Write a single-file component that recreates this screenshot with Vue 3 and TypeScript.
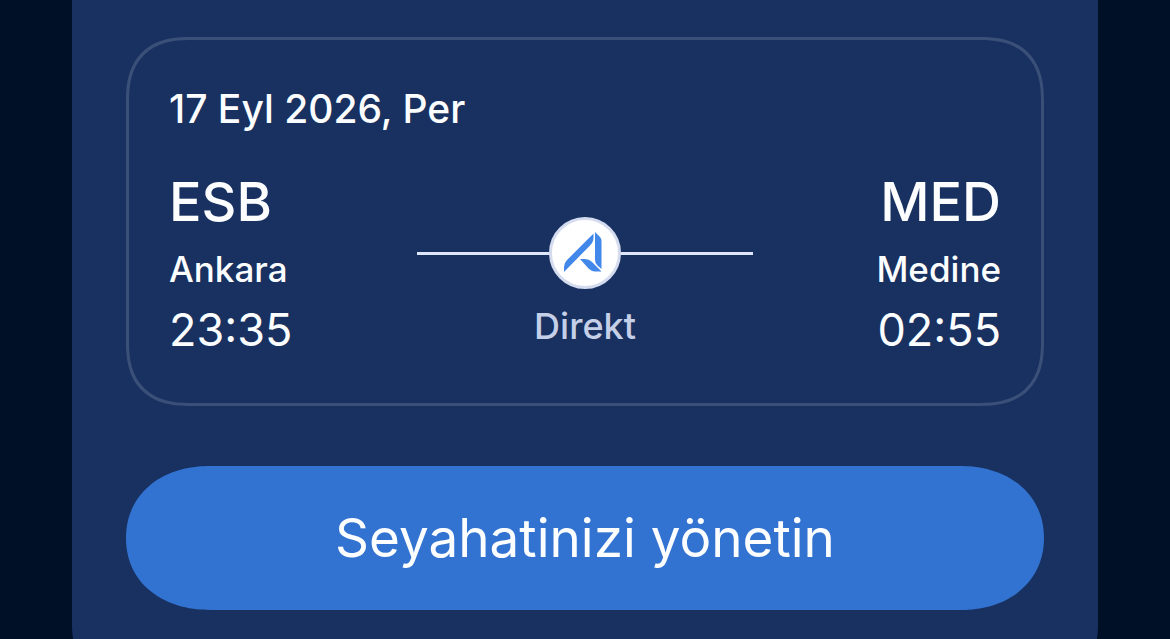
<script setup lang="ts">
interface Stop {
  code: string
  city: string
  time: string
}

const date = '17 Eyl 2026, Per'
const departure: Stop = { code: 'ESB', city: 'Ankara', time: '23:35' }
const arrival: Stop = { code: 'MED', city: 'Medine', time: '02:55' }
</script>

<template>
  <div class="screen">
    <main class="sheet">
      <section class="card">
        <p class="date">{{ date }}</p>
        <div class="route">
          <div class="stop">
            <strong class="code">{{ departure.code }}</strong>
            <span class="city">{{ departure.city }}</span>
            <time class="time">{{ departure.time }}</time>
          </div>
          <div class="leg">
            <div class="track">
              <span class="line"></span>
              <span class="badge">
                <svg viewBox="0 0 42 40" width="42" height="40" aria-hidden="true">
                  <path d="M0 39V34Q0 30 3 27L26 4Q29 1 29.500 0.500V4.500Q29.500 9 26 12.500Z" />
                  <path d="M31 -1L36 4Q37.500 5.500 37.500 8V36L33.500 32.500Q31 30 31 27Z" />
                  <path d="M16 26H21Q25 26 28 29L37.500 38.500H31Q27.500 38.500 24.500 35.500Z" />
                </svg>
              </span>
              <span class="line"></span>
            </div>
            <span class="kind">Direkt</span>
          </div>
          <div class="stop end">
            <strong class="code">{{ arrival.code }}</strong>
            <span class="city">{{ arrival.city }}</span>
            <time class="time">{{ arrival.time }}</time>
          </div>
        </div>
      </section>
      <button type="button" class="manage">Seyahatinizi yönetin</button>
    </main>
  </div>
</template>

<style>
html,
body {
  margin: 0;
  background: #001026;
}
</style>

<style scoped>
.screen {
  box-sizing: border-box;
  height: 100vh;
  overflow: hidden;
  padding: 0 72px;
  background: #001026;
  color: #fbfdff;
  font-family: Inter, "Liberation Sans", sans-serif;
}

.sheet {
  display: flex;
  flex-direction: column;
  gap: 60px;
  padding: 37px 54px 96px;
  border-radius: 0 0 80px 80px;
  background: #183160;
}

.card {
  padding: 45px 40px 43px;
  border: 3px solid #3b5079;
  border-radius: 54px;
}

.date {
  margin: 0;
  font-size: 39px;
  line-height: 48px;
  font-weight: 500;
}

.route {
  display: grid;
  grid-template-columns: 1fr 336px 1fr;
  margin-top: 33px;
}

.stop {
  display: flex;
  flex-direction: column;
  align-items: flex-start;
}

.end {
  align-items: flex-end;
}

.code {
  font-size: 54px;
  line-height: 72px;
  font-weight: 500;
}

.city,
.kind {
  line-height: 48px;
  font-weight: 500;
}

.city {
  margin-top: 7px;
  font-size: 35px;
}

.kind {
  color: #c5d0e8;
  font-size: 36px;
}

.time {
  margin-top: 7px;
  font-size: 45px;
  line-height: 60px;
}

.leg {
  display: flex;
  flex-direction: column;
  align-items: center;
  gap: 13px;
  padding-top: 51px;
}

.track {
  display: flex;
  align-items: center;
  width: 100%;
}

.line {
  flex: 1;
  height: 3px;
  background: #dfe6fa;
}

.badge {
  box-sizing: border-box;
  display: flex;
  align-items: center;
  justify-content: center;
  width: 72px;
  height: 72px;
  border: 3px solid #d5dcef;
  border-radius: 50%;
  background: #fff;
}

.badge svg {
  overflow: visible;
  fill: #4287ea;
}

.manage {
  width: 100%;
  padding: 36px 48px;
  border: 0;
  border-radius: 72px;
  background: #3273d1;
  color: #fbfdff;
  font-family: inherit;
  font-size: 53px;
  line-height: 72px;
  font-weight: 400;
  cursor: pointer;
}

@supports (corner-shape: superellipse(1.5)) {
  .card {
    border-radius: 64px;
    corner-shape: superellipse(1.3);
  }

  .manage {
    border-radius: 84px / 72px;
    corner-shape: superellipse(1.1);
  }
}
</style>
